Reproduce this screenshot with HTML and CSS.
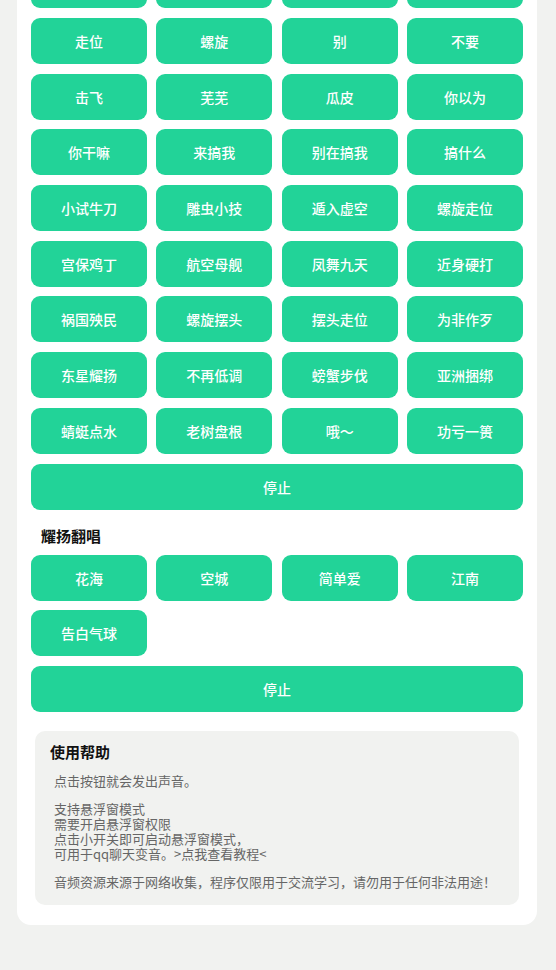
FILE: index.html
```html
<!DOCTYPE html>
<html lang="zh-CN">
<head>
    <meta charset="UTF-8">
    <title>耀扬语音盒</title>
    <link rel="stylesheet" href="styles.css">
</head>
<body>
<div class="card">
    <div class="pad">
        <button class="btn">哈哈哈</button>
        <button class="btn">耀扬</button>
        <button class="btn">来啊</button>
        <button class="btn">打我啊</button>
        <button class="btn">走位</button>
        <button class="btn">螺旋</button>
        <button class="btn">别</button>
        <button class="btn">不要</button>
        <button class="btn">击飞</button>
        <button class="btn">芜芜</button>
        <button class="btn">瓜皮</button>
        <button class="btn">你以为</button>
        <button class="btn">你干嘛</button>
        <button class="btn">来搞我</button>
        <button class="btn">别在搞我</button>
        <button class="btn">搞什么</button>
        <button class="btn">小试牛刀</button>
        <button class="btn">雕虫小技</button>
        <button class="btn">遁入虚空</button>
        <button class="btn">螺旋走位</button>
        <button class="btn">宫保鸡丁</button>
        <button class="btn">航空母舰</button>
        <button class="btn">凤舞九天</button>
        <button class="btn">近身硬打</button>
        <button class="btn">祸国殃民</button>
        <button class="btn">螺旋摆头</button>
        <button class="btn">摆头走位</button>
        <button class="btn">为非作歹</button>
        <button class="btn">东星耀扬</button>
        <button class="btn">不再低调</button>
        <button class="btn">螃蟹步伐</button>
        <button class="btn">亚洲捆绑</button>
        <button class="btn">蜻蜓点水</button>
        <button class="btn">老树盘根</button>
        <button class="btn">哦～</button>
        <button class="btn">功亏一篑</button>
        <button class="btn btn-stop">停止</button>
    </div>

    <h3 class="section-title">耀扬翻唱</h3>
    <div class="pad">
        <button class="btn">花海</button>
        <button class="btn">空城</button>
        <button class="btn">简单爱</button>
        <button class="btn">江南</button>
        <button class="btn">告白气球</button>
        <button class="btn btn-stop">停止</button>
    </div>

    <div class="help">
        <h4 class="help-title">使用帮助</h4>
        <p>点击按钮就会发出声音。</p>
        <p>支持悬浮窗模式<br>需要开启悬浮窗权限<br>点击小开关即可启动悬浮窗模式，<br>可用于qq聊天变音。&gt;点我查看教程&lt;</p>
        <p>音频资源来源于网络收集，程序仅限用于交流学习，请勿用于任何非法用途！</p>
    </div>
</div>
</body>
</html>
```

FILE: styles.css
```css
*{
    padding: 0;
    margin: 0;
    box-sizing: border-box;
}
body{
    background: #f1f2f0;
    font-family: "Noto Sans CJK SC", "Noto Sans", sans-serif;
}
.card{
    width: 520px;
    margin: -37.7px 0 0 17px;
    padding: 0 14px 20px;
    background: #fff;
    border-radius: 0 0 14px 14px;
}
.pad{
    display: grid;
    grid-template-columns: repeat(4, 1fr);
    gap: 9.7px 9.33px;
}
.btn{
    height: 46px;
    border: none;
    border-radius: 9px;
    background: #22d398;
    color: #fff;
    font-family: inherit;
    font-size: 14px;
    font-weight: 500;
}
.btn-stop{
    grid-column: 1 / -1;
}
.section-title{
    padding: 16px 10px 9px;
    font-size: 15px;
    line-height: 20px;
    font-weight: bold;
    color: #111;
}
.help{
    margin: 19px 4px 0;
    padding: 11px 15px 16px;
    background: #f1f2f0;
    border-radius: 10px;
}
.help-title{
    font-size: 15px;
    line-height: 20px;
    font-weight: bold;
    color: #111;
    margin-bottom: 11px;
}
.help p{
    margin: 0 0 13px 4px;
    font-size: 13px;
    line-height: 15px;
    color: #666;
}
.help p:last-child{
    margin-bottom: 0;
}
```
